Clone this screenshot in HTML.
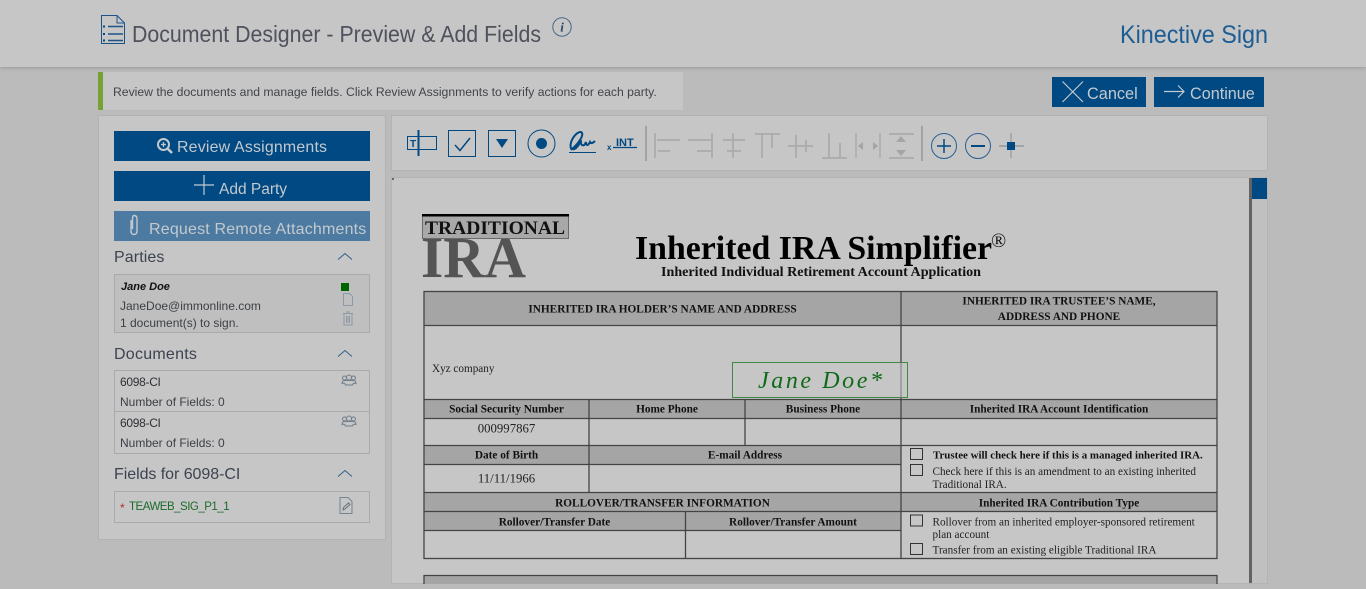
<!DOCTYPE html>
<html><head><meta charset="utf-8"><style>
html,body{margin:0;padding:0;width:1366px;height:589px;overflow:hidden;background:#bbb;font-family:"Liberation Sans",sans-serif}
.a{position:absolute;white-space:nowrap}
.btn{position:absolute;background:#004982;color:#c3c9ce;text-align:center;white-space:nowrap}
svg{position:absolute;overflow:visible}
.box{position:absolute;background:#c0c0c0;border:1px solid #aaa;box-sizing:border-box}
.h{color:#3c4350;font-size:16px}
.t{color:#3c3f45;font-size:12px}
</style></head><body>
<div class="a" style="left:0;top:0;width:1366px;height:67px;background:#c6c6c6;box-shadow:0 1px 4px #999"></div>
<svg style="left:100px;top:14px" width="26" height="32" fill="none" stroke="#1c5488"><path d="M1.500 1.500H17L24.500 9V29.500H1.500Z M17 1.500V9H24.500" stroke-width="1"/><path d="M8 12.500H23M8 20H23M8 26.500H23" stroke-width="1.400"/><path d="M3 12.500h2M3 20h2M3 26.500h2" stroke="#004982" stroke-width="2"/></svg>
<svg style="left:0;top:0" width="1366" height="67"><text x="132" y="42" font-size="23.500" fill="#4f525c" textLength="409" lengthAdjust="spacingAndGlyphs">Document Designer - Preview &amp; Add Fields</text><text x="1120" y="43" font-size="25" fill="#1d5d94" textLength="148" lengthAdjust="spacingAndGlyphs">Kinective Sign</text></svg>
<svg style="left:552px;top:17px" width="20" height="20"><circle cx="10" cy="10" r="9.200" fill="none" stroke="#47698c"/><text x="10" y="14.500" font-family="Liberation Serif" font-style="italic" font-weight="bold" font-size="13" text-anchor="middle" fill="#2b4468">i</text></svg>

<div class="a" style="left:98px;top:72px;width:585px;height:38px;background:#c6c6c6"></div>
<div class="a" style="left:98px;top:72px;width:5px;height:38px;background:#75a332"></div>
<div class="a" style="left:113px;top:85px;font-size:12.200px;color:#42444a">Review the documents and manage fields. Click Review Assignments to verify actions for each party.</div>

<div class="btn" style="left:1052px;top:77px;width:94px;height:30px"></div>
<svg style="left:1061px;top:80px" width="24" height="24" fill="none" stroke="#c3c9ce" stroke-width="1.200"><path d="M1.500 1.500L22 22M22 1.500L1.500 22"/></svg>
<div class="a" style="left:1087px;top:85px;font-size:16.300px;color:#c3c9ce">Cancel</div>
<div class="btn" style="left:1154px;top:77px;width:110px;height:30px"></div>
<svg style="left:1163px;top:84px" width="24" height="16" fill="none" stroke="#c3c9ce" stroke-width="1.200"><path d="M1 7.500H21M15 1.500L21 7.500L15 13.500"/></svg>
<div class="a" style="left:1190px;top:85px;font-size:16.200px;color:#c3c9ce">Continue</div>

<!-- left panel -->
<div class="a" style="left:98px;top:115px;width:288px;height:425px;background:#c6c6c6;border:1px solid #b3b3b3;box-sizing:border-box"></div>
<div class="btn" style="left:114px;top:131px;width:256px;height:30px"></div>
<svg style="left:156px;top:137px" width="18" height="18" fill="none" stroke="#c3c9ce"><circle cx="7.500" cy="7.500" r="5.500" stroke-width="2"/><path d="M12 12L16 16" stroke-width="2.600"/><path d="M5 7.500h5M7.500 5v5" stroke-width="1.300"/></svg>
<div class="a" style="left:177px;top:139px;font-size:15.900px;letter-spacing:.2px;color:#c3c9ce">Review Assignments</div>
<div class="btn" style="left:114px;top:171px;width:256px;height:30px"></div>
<svg style="left:194px;top:175px" width="20" height="20" stroke="#c3c9ce" stroke-width="1.200"><path d="M10 0V20M0 10H20"/></svg>
<div class="a" style="left:219px;top:181px;font-size:15.500px;color:#c3c9ce">Add Party</div>
<div class="btn" style="left:114px;top:211px;width:256px;height:30px;background:#4c7aa0"></div>
<svg style="left:128px;top:214px" width="12" height="22" fill="none" stroke="#c3c9ce" stroke-width="1.400"><path d="M3 6V17Q3 20.500 6 20.500Q9 20.500 9 17V5Q9 1.500 6 1.500Q4.500 1.500 4.500 5V15"/></svg>
<div class="a" style="left:149px;top:221px;font-size:16px;letter-spacing:.19px;color:#c3c9ce">Request Remote Attachments</div>

<div class="a h" style="left:114px;top:249px;letter-spacing:.1px">Parties</div>
<svg style="left:337px;top:252px" width="16" height="9" fill="none" stroke="#2f5f8f"><path d="M1 7.500L8 1.500L15 7.500"/></svg>
<div class="box" style="left:114px;top:274px;width:256px;height:59px;border-width:1px;border-color:#aaa;background:#bfbfbf"></div>
<div class="a" style="left:121px;top:281px;font-size:11px;font-weight:bold;font-style:italic;color:#111">Jane Doe</div>
<div class="a t" style="left:120px;top:299px">JaneDoe@immonline.com</div>
<div class="a t" style="left:120px;top:316px">1 document(s) to sign.</div>
<div class="a" style="left:341px;top:283px;width:8px;height:8px;background:#006400"></div>
<svg style="left:342px;top:293px" width="12" height="13" fill="none" stroke="#8d9aa5"><path d="M1.500 .5H7.500L10.500 3.500V12.500H1.500Z"/></svg>
<svg style="left:342px;top:311px" width="12" height="15" fill="none" stroke="#8d9aa5"><path d="M1 2.500H11M2 3V14H10V3M4 1H8M4.500 5V12M6 5V12M7.500 5V12"/></svg>

<div class="a h" style="left:114px;top:346px;letter-spacing:.25px">Documents</div>
<svg style="left:337px;top:349px" width="16" height="9" fill="none" stroke="#2f5f8f"><path d="M1 7.500L8 1.500L15 7.500"/></svg>
<div class="box" style="left:114px;top:370px;width:256px;height:84px;background:#c6c6c6"></div>
<div class="a" style="left:115px;top:411px;width:254px;height:1px;background:#aaa"></div>
<div class="a t" style="left:120px;top:375px;color:#2f3136;letter-spacing:-.3px">6098-CI</div>
<div class="a t" style="left:120px;top:395px">Number of Fields: 0</div>
<div class="a t" style="left:120px;top:416px;color:#2f3136;letter-spacing:-.3px">6098-CI</div>
<div class="a t" style="left:120px;top:436px">Number of Fields: 0</div>
<svg style="left:341px;top:374px" width="16" height="12" fill="none" stroke="#6f7f8c"><circle cx="8" cy="3.500" r="2.500"/><circle cx="3.500" cy="4" r="2"/><circle cx="12.500" cy="4" r="2"/><path d="M1 9.500Q1 6.500 4 6.500H12Q15 6.500 15 9.500Q12 8.500 11.500 11H4.500Q4 8.500 1 9.500Z"/></svg>
<svg style="left:341px;top:415px" width="16" height="12" fill="none" stroke="#6f7f8c"><circle cx="8" cy="3.500" r="2.500"/><circle cx="3.500" cy="4" r="2"/><circle cx="12.500" cy="4" r="2"/><path d="M1 9.500Q1 6.500 4 6.500H12Q15 6.500 15 9.500Q12 8.500 11.500 11H4.500Q4 8.500 1 9.500Z"/></svg>

<div class="a h" style="left:114px;top:466px;letter-spacing:-.05px">Fields for 6098-CI</div>
<svg style="left:337px;top:469px" width="16" height="9" fill="none" stroke="#2f5f8f"><path d="M1 7.500L8 1.500L15 7.500"/></svg>
<div class="box" style="left:114px;top:491px;width:256px;height:32px;background:#c6c6c6"></div>
<div class="a" style="left:120px;top:501px;font-size:12px;color:#b03030">*</div>
<div class="a" style="left:129px;top:501px;font-size:11.500px;letter-spacing:-.5px;color:#1c6a2c">TEAWEB_SIG_P1_1</div>
<svg style="left:339px;top:497px" width="14" height="17" fill="none" stroke="#75848f"><path d="M1 .5H9L13 4.500V16.500H1Z"/><path d="M4 13L4.500 10.500L9.500 6L11 7.500L6 12Z" stroke="#66737e"/></svg>

<!-- toolbar -->
<div class="a" style="left:391px;top:115px;width:877px;height:56px;background:#c6c6c6;border:1px solid #b3b3b3;box-sizing:border-box"></div>
<svg style="left:391px;top:115px" width="650" height="56" fill="none" stroke="#004982">
<rect x="16.500" y="21.500" width="29" height="13" stroke-width="1"/><path d="M27.500 15V41" stroke-width="2"/><text x="19" y="32" font-size="10" font-weight="bold" fill="#004982" stroke="none">T</text>
<rect x="57.500" y="15.500" width="27" height="26" stroke-width="1"/><path d="M64 30L69 35.500L79 23" stroke-width="1.500"/>
<rect x="97.500" y="15.500" width="27" height="26" stroke-width="1"/><path d="M105 24H117L111 33Z" fill="#004982" stroke="none"/>
<circle cx="150.500" cy="28.500" r="13.500" stroke-width="1"/><circle cx="150.500" cy="28.500" r="5.500" fill="#004982" stroke="none"/>
<path d="M178 37.500H205" stroke-width="1"/><path d="M181 35C176 29 185 16 190 17C194 19 188 28 181 34C186 36 190 25 190 26C189 30 193 33 195 27C195 31 197 31 199 27C200 29 202 28 204 26" stroke-width="2"/>
<text x="216" y="35" font-size="8" font-weight="bold" fill="#004982" stroke="none">x</text><text x="225" y="31" font-size="11" font-weight="bold" fill="#004982" stroke="none">INT</text><path d="M222 32.500H246" stroke-width="1.200"/>
<path d="M255 11V46" stroke="#8a8a8a" stroke-width="1.200"/>
</svg>
<svg style="left:391px;top:115px" width="877" height="56" fill="none" stroke="#ababae" stroke-width="1.800">
<path d="M264 18V43M266 25H289M267 36H279"/><path d="M321 18V43M297 25H320M306 36H320"/>
<path d="M342 18V43M332 25H354M336 36H350"/>
<path d="M364 19H389M371 19V43M381 20V33"/>
<path d="M397 31H422M405 20V43M415 25V37"/>
<path d="M431 43H456M438 18V43M449 28V43"/>
<path d="M465 18V43M489 18V43" stroke-width="1.500"/><path d="M467 31L472 27V35ZM487 31L482 27V35Z" fill="#a5a5a8" stroke="none"/>
<path d="M498 19H523M498 43H523"/><path d="M510 21L515 27H505ZM510 41L515 35H505Z" fill="#a5a5a8" stroke="none"/>
<path d="M531 11V46" stroke="#8a8a8a" stroke-width="1.200"/>
<circle cx="553" cy="31" r="12.500" stroke="#2a6090" stroke-width="1"/><path d="M546 31H560M553 24V38" stroke="#004982" stroke-width="1.500"/>
<circle cx="587" cy="31" r="12.500" stroke="#2a6090" stroke-width="1"/><path d="M580 31H594" stroke="#004982" stroke-width="2"/>
<path d="M608 31H633" stroke="#9aa0a5" stroke-width="1.800"/><path d="M620 18V43" stroke="#8a9298" stroke-width="1"/><rect x="616" y="27" width="8" height="8" fill="#004982" stroke="none"/>
</svg>

<!-- document -->
<div class="a" style="left:391px;top:177px;width:877px;height:407px;background:#c6c6c6;border:1px solid #b3b3b3;box-sizing:border-box"></div>
<div class="a" style="left:392px;top:178px;width:2px;height:2px;background:#666"></div>
<div class="a" style="left:1249px;top:178px;width:3px;height:405px;background:#636363"></div>
<div class="a" style="left:1252px;top:178px;width:15px;height:405px;background:#c0c0c0"></div>
<div class="a" style="left:1252px;top:178px;width:15px;height:21px;background:#004982"></div>
<svg style="left:0;top:0" width="1366" height="589" font-family="Liberation Serif" fill="#111">
<text x="421" y="277" font-size="58" font-weight="bold" fill="#545454" textLength="105" lengthAdjust="spacingAndGlyphs">IRA</text>
<rect x="422.500" y="214.500" width="146" height="24" fill="#a8a8a8" stroke="#6a6a6a" stroke-width="1"/><rect x="422" y="214" width="147" height="2.500" fill="#000"/>
<text x="425" y="234" font-size="19" font-weight="bold" textLength="140" lengthAdjust="spacingAndGlyphs">TRADITIONAL</text>
<text x="635" y="259" font-size="33.500" font-weight="bold" textLength="357" lengthAdjust="spacingAndGlyphs" fill="#000">Inherited IRA Simplifier</text>
<text x="991" y="247" font-size="20">®</text>
<text x="661" y="276" font-size="13.300" font-weight="bold" textLength="320" lengthAdjust="spacingAndGlyphs">Inherited Individual Retirement Account Application</text>

<g fill="#a5a5a5">
<rect x="424" y="292" width="793" height="33"/><rect x="424" y="400" width="793" height="18"/>
<rect x="424" y="446" width="477" height="18"/><rect x="424" y="493" width="793" height="18"/><rect x="424" y="512" width="477" height="18"/>
<rect x="424" y="576" width="793" height="8"/>
</g>
<g stroke="#444" stroke-width="1.300" fill="none">
<rect x="424" y="291.500" width="793" height="267"/>
<path d="M424 325.500H1217M424 399.500H1217M424 418.500H1217M424 445.500H1217M424 464.500H901M424 492.500H1217M424 511.500H1217M424 530.500H901"/>
<path d="M901 292V558M589 400V445M745 400V445M589 446V492M685.500 512V558"/>
<path d="M424 584V575.500H1217V584"/>
</g>
<g font-size="11.300" font-weight="bold" text-anchor="middle">
<text x="662.500" y="312.500">INHERITED IRA HOLDER’S NAME AND ADDRESS</text>
<text x="1059" y="304.500">INHERITED IRA TRUSTEE’S NAME,</text>
<text x="1059" y="320">ADDRESS AND PHONE</text>
<text x="506.500" y="412.500">Social Security Number</text>
<text x="667" y="412.500">Home Phone</text>
<text x="823" y="412.500">Business Phone</text>
<text x="1059" y="412.500">Inherited IRA Account Identification</text>
<text x="506.500" y="458.500">Date of Birth</text>
<text x="745" y="458.500">E-mail Address</text>
<text x="662.500" y="506.500">ROLLOVER/TRANSFER INFORMATION</text>
<text x="1059" y="506.500">Inherited IRA Contribution Type</text>
<text x="554.500" y="525.500">Rollover/Transfer Date</text>
<text x="793" y="525.500">Rollover/Transfer Amount</text>
</g>
<g font-size="12.800" text-anchor="middle" fill="#222">
<text x="506.500" y="432.500">000997867</text><text x="506.500" y="482.500">11/11/1966</text>
</g>
<text x="432" y="372" font-size="11.200" fill="#222">Xyz company</text>
<text x="933" y="458.500" font-size="10.900" font-weight="bold">Trustee will check here if this is a managed inherited IRA.</text>
<g font-size="11.200" fill="#222">
<text x="932.500" y="475">Check here if this is an amendment to an existing inherited</text>
<text x="932.500" y="488">Traditional IRA.</text>
<text x="932.500" y="525.500">Rollover from an inherited employer-sponsored retirement</text>
<text x="932.500" y="538">plan account</text>
<text x="932.500" y="553.500">Transfer from an existing eligible Traditional IRA</text>
</g>
<g fill="none" stroke="#333" stroke-width="1"><rect x="910.500" y="448.500" width="12" height="11"/><rect x="910.500" y="464.500" width="12" height="11"/><rect x="910.500" y="515" width="12" height="11"/><rect x="910.500" y="543.500" width="12" height="11"/></g>
<rect x="732.500" y="362.500" width="175" height="35" fill="#c6c6c6" fill-opacity=".55" stroke="#3d8a44" stroke-width="1"/>
<text x="758" y="388" font-size="24" font-style="italic" fill="#0f6a18" textLength="124" lengthAdjust="spacing">Jane Doe*</text>
</svg>
</body></html>
